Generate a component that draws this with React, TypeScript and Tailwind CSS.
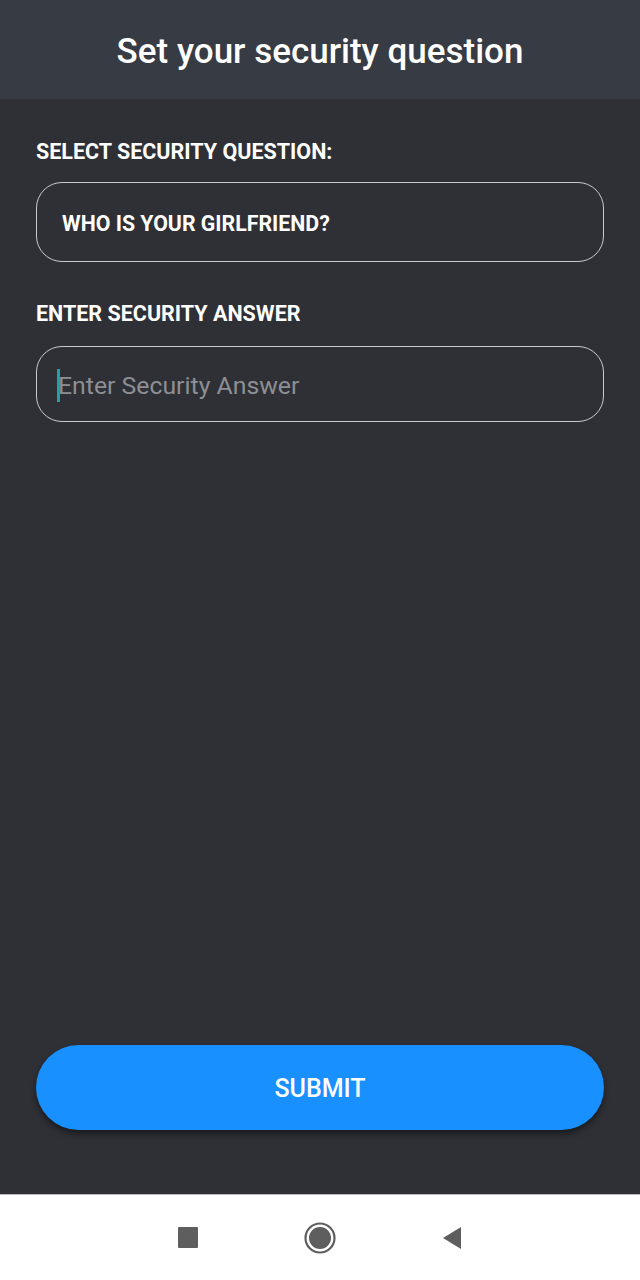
import React from 'react';

export default function App() {
  return (
    <div className="w-[640px] h-[1280px] flex flex-col bg-[#2e3036] font-['Roboto',sans-serif]">
      <header className="h-[99px] bg-[#373b44] flex items-center justify-center shrink-0 pt-[4px]">
        <h1 className="text-[35px] leading-[40px] font-medium text-white">Set your security question</h1>
      </header>

      <main className="flex-1 flex flex-col px-[36px]">
        <label className="mt-[40px] text-[21.5px] leading-[26px] font-bold text-white">SELECT SECURITY QUESTION:</label>
        <div className="mt-[17px] h-[80px] rounded-[26px] border border-[#c9cacc] flex items-center px-[25px] pt-[3px]">
          <span className="text-[21.3px] font-bold text-white">WHO IS YOUR GIRLFRIEND?</span>
        </div>

        <label className="mt-[39px] text-[21.5px] leading-[26px] font-bold text-white">ENTER SECURITY ANSWER</label>
        <div className="mt-[19px] h-[76px] rounded-[26px] border border-[#c9cacc] flex items-center pl-[20px] pr-[25px] pt-[3px]">
          <span className="w-[3px] h-[33px] bg-[#1fa2a8] -mr-[2px]" />
          <span className="text-[24.8px] text-[#8d8f94]">Enter Security Answer</span>
        </div>

        <div className="flex-1" />

        <button className="h-[85px] rounded-full bg-[#1890ff] text-white text-[25px] font-medium pt-[3px] shadow-[0_4px_6px_rgba(0,0,0,0.45)] mb-[64px]">
          SUBMIT
        </button>
      </main>

      <nav className="h-[86px] bg-white flex items-center justify-center shrink-0 border-t border-[#bbb]">
        <div className="w-[132px] flex justify-center">
          <div className="w-[20px] h-[21px] bg-[#5e5e5e] rounded-[1px]" />
        </div>
        <div className="w-[132px] flex justify-center">
          <svg width="32" height="32" viewBox="0 0 32 32">
            <circle cx="16" cy="16" r="14.5" fill="none" stroke="#5e5e5e" strokeWidth="2.2" />
            <circle cx="16" cy="16" r="11" fill="#5e5e5e" />
          </svg>
        </div>
        <div className="w-[132px] flex justify-center">
          <svg width="22" height="24" viewBox="0 0 22 24">
            <path d="M20 1 L20 23 L2 12 Z" fill="#5e5e5e" />
          </svg>
        </div>
      </nav>
    </div>
  );
}
